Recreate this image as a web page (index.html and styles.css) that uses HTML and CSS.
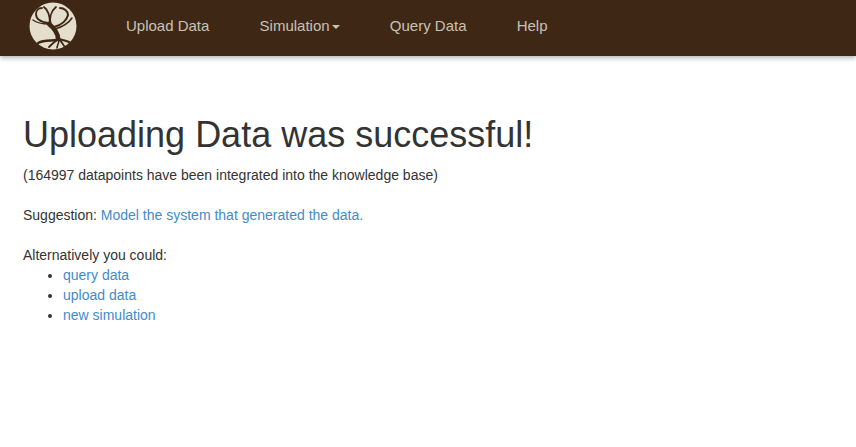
FILE: index.html
```html
<!DOCTYPE html>
<html lang="en">

<head>
    <meta charset="UTF-8">
    <title>Upload Data</title>
    <link rel="stylesheet" href="styles.css">
</head>

<body>
    <nav class="navbar">
        <a class="brand" href="#">
            <svg class="logo" viewBox="0 0 48 48" width="48" height="48">
                <circle cx="24" cy="24" r="23.5" fill="#e4decd"/>
                <g fill="none" stroke="#3e2714" stroke-linecap="round">
                    <path d="M29 37C29 30 25 26 20 22" stroke-width="4.6"/>
                    <path d="M19 21C12 20 7 17 7 12C7 8 10 6 13 6" stroke-width="1.8"/>
                    <path d="M20 22C14 22 8 21 4 18" stroke-width="1.4"/>
                    <path d="M21 22C21 14 19 8 15 5" stroke-width="1.8"/>
                    <path d="M22 23C20 16 22 9 27 5" stroke-width="1.8"/>
                    <path d="M25 25C33 23 38 18 39 13C39 9 35 6 31 6" stroke-width="2"/>
                    <path d="M26 27C33 25 39 22 43 16" stroke-width="1.5"/>
                    <path d="M28 38C22 39 15 38 9 41" stroke-width="2.4"/>
                    <path d="M28 38C24 41 22 43 20 45" stroke-width="1.8"/>
                    <path d="M30 38C30 41 28 44 28 46" stroke-width="1.6"/>
                    <path d="M30 37C33 40 34 43 36 45" stroke-width="1.8"/>
                    <path d="M30 37C34 38 38 39 40 40" stroke-width="2.2"/>
                </g>
            </svg>
        </a>
        <ul class="nav">
            <li><a href="#">Upload Data</a></li>
            <li><a href="#">Simulation<span class="caret"></span></a></li>
            <li><a href="#">Query Data</a></li>
            <li><a href="#">Help</a></li>
        </ul>
    </nav>

    <div class="container">
        <h1>Uploading Data was successful!</h1>
        <p>(164997 datapoints have been integrated into the knowledge base)</p>
        <p class="suggestion">Suggestion: <a href="#">Model the system that generated the data.</a></p>
        <p class="alt">Alternatively you could:</p>
        <ul class="options">
            <li><a href="#">query data</a></li>
            <li><a href="#">upload data</a></li>
            <li><a href="#">new simulation</a></li>
        </ul>
    </div>
</body>

</html>
```

FILE: styles.css
```css
body {
    margin: 0;
    font-family: "Liberation Sans", Arial, sans-serif;
    font-size: 14px;
    line-height: 20px;
    color: #333;
    background-color: #fff;
}

a {
    color: #428bca;
    text-decoration: none;
}

.navbar {
    display: flex;
    align-items: center;
    box-sizing: border-box;
    height: 56px;
    padding-bottom: 4px;
    background-color: #3e2815;
    box-shadow: 0 2px 5px rgba(0, 0, 0, 0.3);
}

.brand {
    display: flex;
    margin-left: 29px;
}

.logo {
    display: block;
}

.nav {
    display: flex;
    margin: 0 0 0 23.9px;
    padding: 0;
    list-style: none;
}

.nav a {
    display: block;
    padding: 0 25.1px;
    font-size: 15px;
    color: #c9c1b6;
}

.caret {
    display: inline-block;
    margin-left: 2px;
    vertical-align: middle;
    border-top: 4px solid #c9c1b6;
    border-left: 4px solid transparent;
    border-right: 4px solid transparent;
}

.container {
    padding: 0 23px;
}

h1 {
    margin: 59px 0 10px;
    font-size: 36px;
    font-weight: 500;
    line-height: 40px;
}

p {
    margin: 0;
}

.suggestion {
    margin-top: 20px;
}

.alt {
    margin-top: 20px;
}

.options {
    margin: 0;
    padding-left: 40px;
}
```
